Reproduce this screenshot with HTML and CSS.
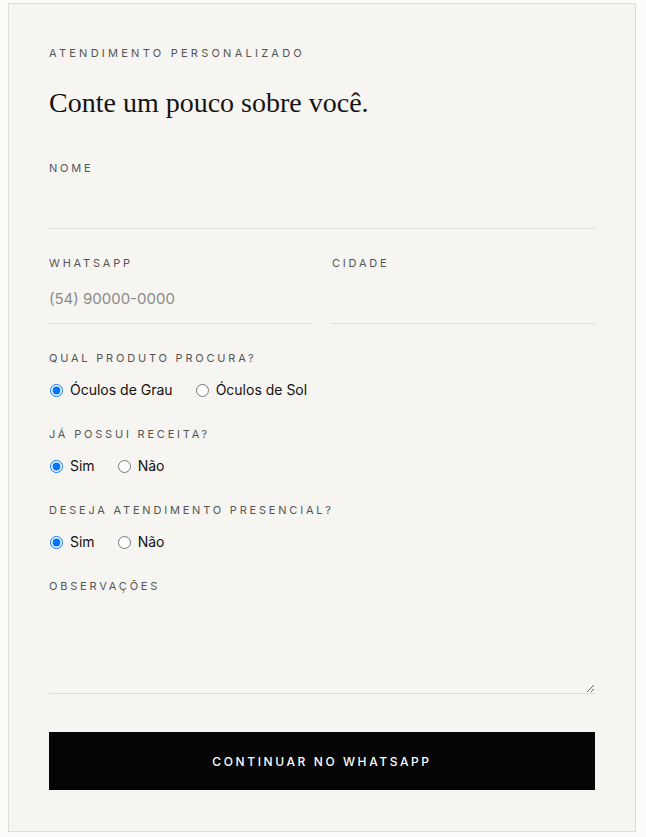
FILE: index.html
```html
<!DOCTYPE html>
<html lang="pt-BR">
<head>
    <meta charset="UTF-8">
    <meta name="viewport" content="width=device-width, initial-scale=1.0">
    <title>Atendimento Personalizado</title>
    <link rel="stylesheet" href="styles.css">
</head>
<body>
    <div class="card">
        <p class="eyebrow">Atendimento personalizado</p>
        <h1>Conte um pouco sobre você.</h1>

        <form class="form" onsubmit="return false;">
            <div class="field">
                <label class="label" for="nome">Nome</label>
                <input class="input" type="text" id="nome">
            </div>

            <div class="row">
                <div class="field">
                    <label class="label" for="whatsapp">WhatsApp</label>
                    <input class="input" type="tel" id="whatsapp" placeholder="(54) 90000-0000">
                </div>
                <div class="field">
                    <label class="label" for="cidade">Cidade</label>
                    <input class="input" type="text" id="cidade">
                </div>
            </div>

            <div class="field">
                <span class="label">Qual produto procura?</span>
                <div class="options">
                    <label class="option"><input type="radio" name="produto" checked> Óculos de Grau</label>
                    <label class="option"><input type="radio" name="produto"> Óculos de Sol</label>
                </div>
            </div>

            <div class="field">
                <span class="label">Já possui receita?</span>
                <div class="options">
                    <label class="option"><input type="radio" name="receita" checked> Sim</label>
                    <label class="option"><input type="radio" name="receita"> Não</label>
                </div>
            </div>

            <div class="field">
                <span class="label">Deseja atendimento presencial?</span>
                <div class="options">
                    <label class="option"><input type="radio" name="presencial" checked> Sim</label>
                    <label class="option"><input type="radio" name="presencial"> Não</label>
                </div>
            </div>

            <div class="field">
                <label class="label" for="obs">Observações</label>
                <textarea class="input textarea" id="obs"></textarea>
            </div>

            <button type="submit" class="submit">Continuar no WhatsApp</button>
        </form>
    </div>
</body>
</html>
```

FILE: styles.css
```css
body {
    margin: 3px 10px 6px 8px;
    background: #fcfcfa;
    font-family: Inter, 'Liberation Sans', sans-serif;
    color: #111;
}

.card {
    background: #f6f5f1;
    border: 1px solid #dddcd8;
    padding: 41px 40px 41px;
}

.eyebrow {
    margin: 0;
    font-size: 11px;
    line-height: 16px;
    letter-spacing: 3.25px;
    text-transform: uppercase;
    color: #555;
}

h1 {
    margin: 24px 0 39px;
    font-family: 'Liberation Serif', serif;
    font-weight: normal;
    font-size: 28px;
    line-height: 36px;
    color: #141414;
}

.form {
    display: flex;
    flex-direction: column;
    gap: 26px;
}

.row {
    display: grid;
    grid-template-columns: 1fr 1fr;
    gap: 20px;
}

.field {
    display: flex;
    flex-direction: column;
}

.label {
    font-size: 11px;
    line-height: 16px;
    letter-spacing: 2.8px;
    text-transform: uppercase;
    color: #555;
}

.input {
    margin-top: 4px;
    padding: 14px 0;
    border: none;
    border-bottom: 1px solid #dcdbd6;
    background: transparent;
    font-family: inherit;
    font-size: 15px;
    line-height: 20px;
    color: #111;
    outline: none;
}

.input::placeholder {
    color: #8a8a8a;
}

.textarea {
    box-sizing: border-box;
    height: 96px;
    resize: vertical;
}

.options {
    display: flex;
    gap: 22px;
    margin-top: 14px;
}

.option {
    display: flex;
    align-items: center;
    gap: 7px;
    font-size: 14px;
    line-height: 20px;
    color: #111;
}

.option input {
    margin: 0 0 0 1px;
    width: 13px;
    height: 13px;
}

.submit {
    margin-top: 12px;
    height: 58px;
    border: none;
    background: #050505;
    color: #fff;
    font-family: inherit;
    font-size: 12px;
    font-weight: 500;
    letter-spacing: 2.6px;
    text-transform: uppercase;
    cursor: pointer;
}
```
